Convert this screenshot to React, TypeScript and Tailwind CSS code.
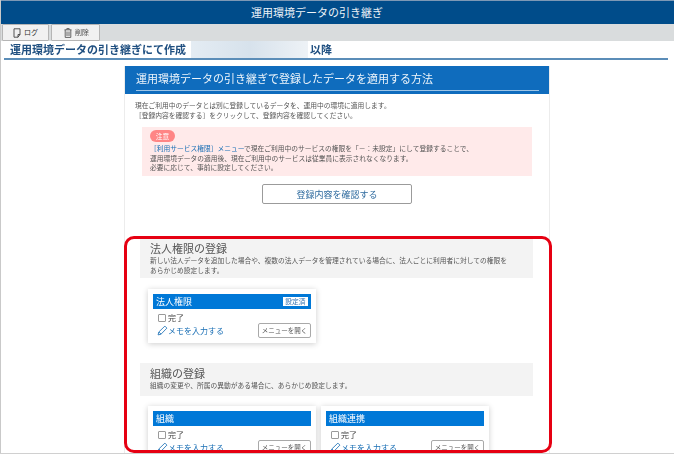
import React from "react";

const font = { fontFamily: '"Noto Sans CJK JP", "Noto Sans", sans-serif' };

function Pencil() {
  return (
    <svg width="11" height="11" viewBox="0 0 12 12" fill="none" stroke="#1a6fb5" strokeWidth="0.9" className="shrink-0">
      <path d="M1.2 10.8 L2 7.6 L8.6 1.2 L10.8 3.4 L4.4 10 Z" />
      <path d="M2 7.6 L4.4 10" />
    </svg>
  );
}

function Card({ title, done }: { title: string; done?: boolean }) {
  return (
    <div className="w-[168px] h-[54px] shrink-0 bg-white px-[5px] pt-[5px] shadow-[0_1px_6px_rgba(0,0,0,0.2)]">
      <div className="h-[15px] bg-[#0078d7] flex items-center justify-between pl-[3px] pr-[3px] text-[9px] text-white leading-none">
        <span>{title}</span>
        {done && (
          <span className="bg-white text-[#2f6fb0] text-[6.75px] h-[9px] w-[25px] flex items-center justify-center">設定済</span>
        )}
      </div>
      <div className="flex items-center mt-[4px] pl-[5px] h-[9px]">
        <span className="w-[8px] h-[8px] border border-[#9a9a9a] rounded-[1px] bg-white mr-[2px]" />
        <span className="text-[8px] leading-none text-[#444]">完了</span>
      </div>
      <div className="flex items-start justify-between mt-[1px]">
        <div className="flex items-center pl-[4px] mt-[2px]">
          <Pencil />
          <span className="text-[8px] leading-none text-[#1a6fb5]">メモを入力する</span>
        </div>
        <div className="w-[53px] h-[15px] border border-[#a9a9a9] rounded-[2px] flex items-center justify-center text-[6.5px] text-[#555] bg-white leading-none">
          メニューを開く
        </div>
      </div>
    </div>
  );
}

function Section({ title, children, h }: { title: string; children: React.ReactNode; h: string }) {
  return (
    <div className={`bg-[#f3f3f3] ml-[15px] mr-[16px] pl-[10px] pt-[3px] ${h}`}>
      <div className="text-[11px] leading-[14px] text-[#555]">{title}</div>
      <div className="text-[6.75px] leading-[9.5px] text-[#555] mt-[1px]">{children}</div>
    </div>
  );
}

export default function App() {
  return (
    <div className="relative w-[674px] h-[454px] overflow-hidden bg-white" style={font}>
      <div className="blur-[0.3px]">
        <div className="h-[24px] bg-[#004c8a] border-t border-[#7d98b5] flex items-center justify-center pr-[40px] text-[11px] text-[#eef3f8]">
          運用環境データの引き継ぎ
        </div>
        <div className="h-[17px] bg-[#d9dcdd] flex pl-[2px] gap-[2px]">
          <div className="w-[47px] h-[17px] bg-[#f1f1f1] border border-[#b5b5b5] rounded-[1px] flex items-center pl-[10px] gap-[3px] text-[7px] text-[#333] leading-none">
            <svg width="8" height="10" viewBox="0 0 8 10" fill="none" stroke="#444" strokeWidth="0.9">
              <path d="M1 .8 H7 V6.5 L5 9.2 H1 Z M5 9.2 V6.5 H7" />
            </svg>
            ログ
          </div>
          <div className="w-[49px] h-[17px] bg-[#f1f1f1] border border-[#b5b5b5] rounded-[1px] flex items-center pl-[12px] gap-[3px] text-[7px] text-[#444] leading-none">
            <svg width="8" height="10" viewBox="0 0 8 10" fill="none" stroke="#555" strokeWidth="0.9">
              <path d="M.5 1.8 H7.5 M2.8 1.6 V.6 H5.2 V1.6 M1.2 2 V9.4 H6.8 V2 M3 3.5 V8 M5 3.5 V8" />
            </svg>
            削除
          </div>
        </div>
        <div className="h-[19px] mx-[4px] w-[664px] border-b-2 border-[#5b8db8] flex items-center text-[11px] font-bold text-[#1f4f80] pl-[6px] leading-none">
          <span className="w-[181px]">運用環境データの引き継ぎにて作成</span>
          <span className="w-[117px] h-[17px] mb-[1px] bg-gradient-to-r from-[#e4ecf3] via-[#d7e2ec] to-[#eef2f6]" />
          <span className="ml-[2px]">以降</span>
        </div>
        <div className="w-[426px] h-[400px] mx-auto mt-[6px] border-x border-[#ececec]">
          <div className="h-[28px] bg-[#0f6cbd] pl-[11px] pr-[10px] pt-[5px]">
            <div className="h-[20px] border-b border-[#9cc4e6] text-[11px] leading-[14px] text-[#eef5fb]">
              運用環境データの引き継ぎで登録したデータを適用する方法
            </div>
          </div>
          <div className="text-[6.75px] leading-[9.5px] text-[#555] pl-[10px] mt-[7px]">
            <div>現在ご利用中のデータとは別に登録しているデータを、運用中の環境に適用します。</div>
            <div>［登録内容を確認する］をクリックして、登録内容を確認してください。</div>
          </div>
          <div className="mx-[17px] h-[49px] mt-[7px] bg-[#ffeaea] pl-[8px] pt-[3px] text-[6.75px] leading-[9.5px] text-[#555]">
            <div className="w-[25px] h-[12px] bg-[#ff8585] rounded-full text-white flex items-center justify-center leading-none">注意</div>
            <div className="mt-[2px]">
              <span className="text-[#1a6fb5]">［利用サービス権限］メニュー</span>で現在ご利用中のサービスの権限を「－：未設定」にして登録することで、
            </div>
            <div>運用環境データの適用後、現在ご利用中のサービスは従業員に表示されなくなります。</div>
            <div>必要に応じて、事前に設定してください。</div>
          </div>
          <div className="w-[150px] h-[20px] mx-auto mt-[8px] border border-[#9b9b9b] rounded-[2px] flex items-center justify-center text-[9px] text-[#2f6b9f] leading-none">
            登録内容を確認する
          </div>
          <div className="mt-[34px]">
            <Section title="法人権限の登録" h="h-[40px]">
              <div>新しい法人データを追加した場合や、複数の法人データを管理されている場合に、法人ごとに利用者に対しての権限を</div>
              <div>あらかじめ設定します。</div>
            </Section>
            <div className="mt-[11px] ml-[23px]">
              <Card title="法人権限" done />
            </div>
          </div>
          <div className="mt-[20px]">
            <Section title="組織の登録" h="h-[33px]">
              組織の変更や、所属の異動がある場合に、あらかじめ設定します。
            </Section>
            <div className="mt-[10px] ml-[23px] flex gap-[5px]">
              <Card title="組織" />
              <Card title="組織連携" />
            </div>
          </div>
        </div>
      </div>
      <div className="absolute left-[124px] top-[236px] w-[428px] h-[217px] border-[3px] border-[#e60012] rounded-[10px]" />
      <div className="absolute left-0 top-0 w-[1px] h-full bg-[#c9c9c9]" />
      <div className="absolute left-0 bottom-0 w-full h-[1px] bg-[#d0d0d0]" />
    </div>
  );
}
